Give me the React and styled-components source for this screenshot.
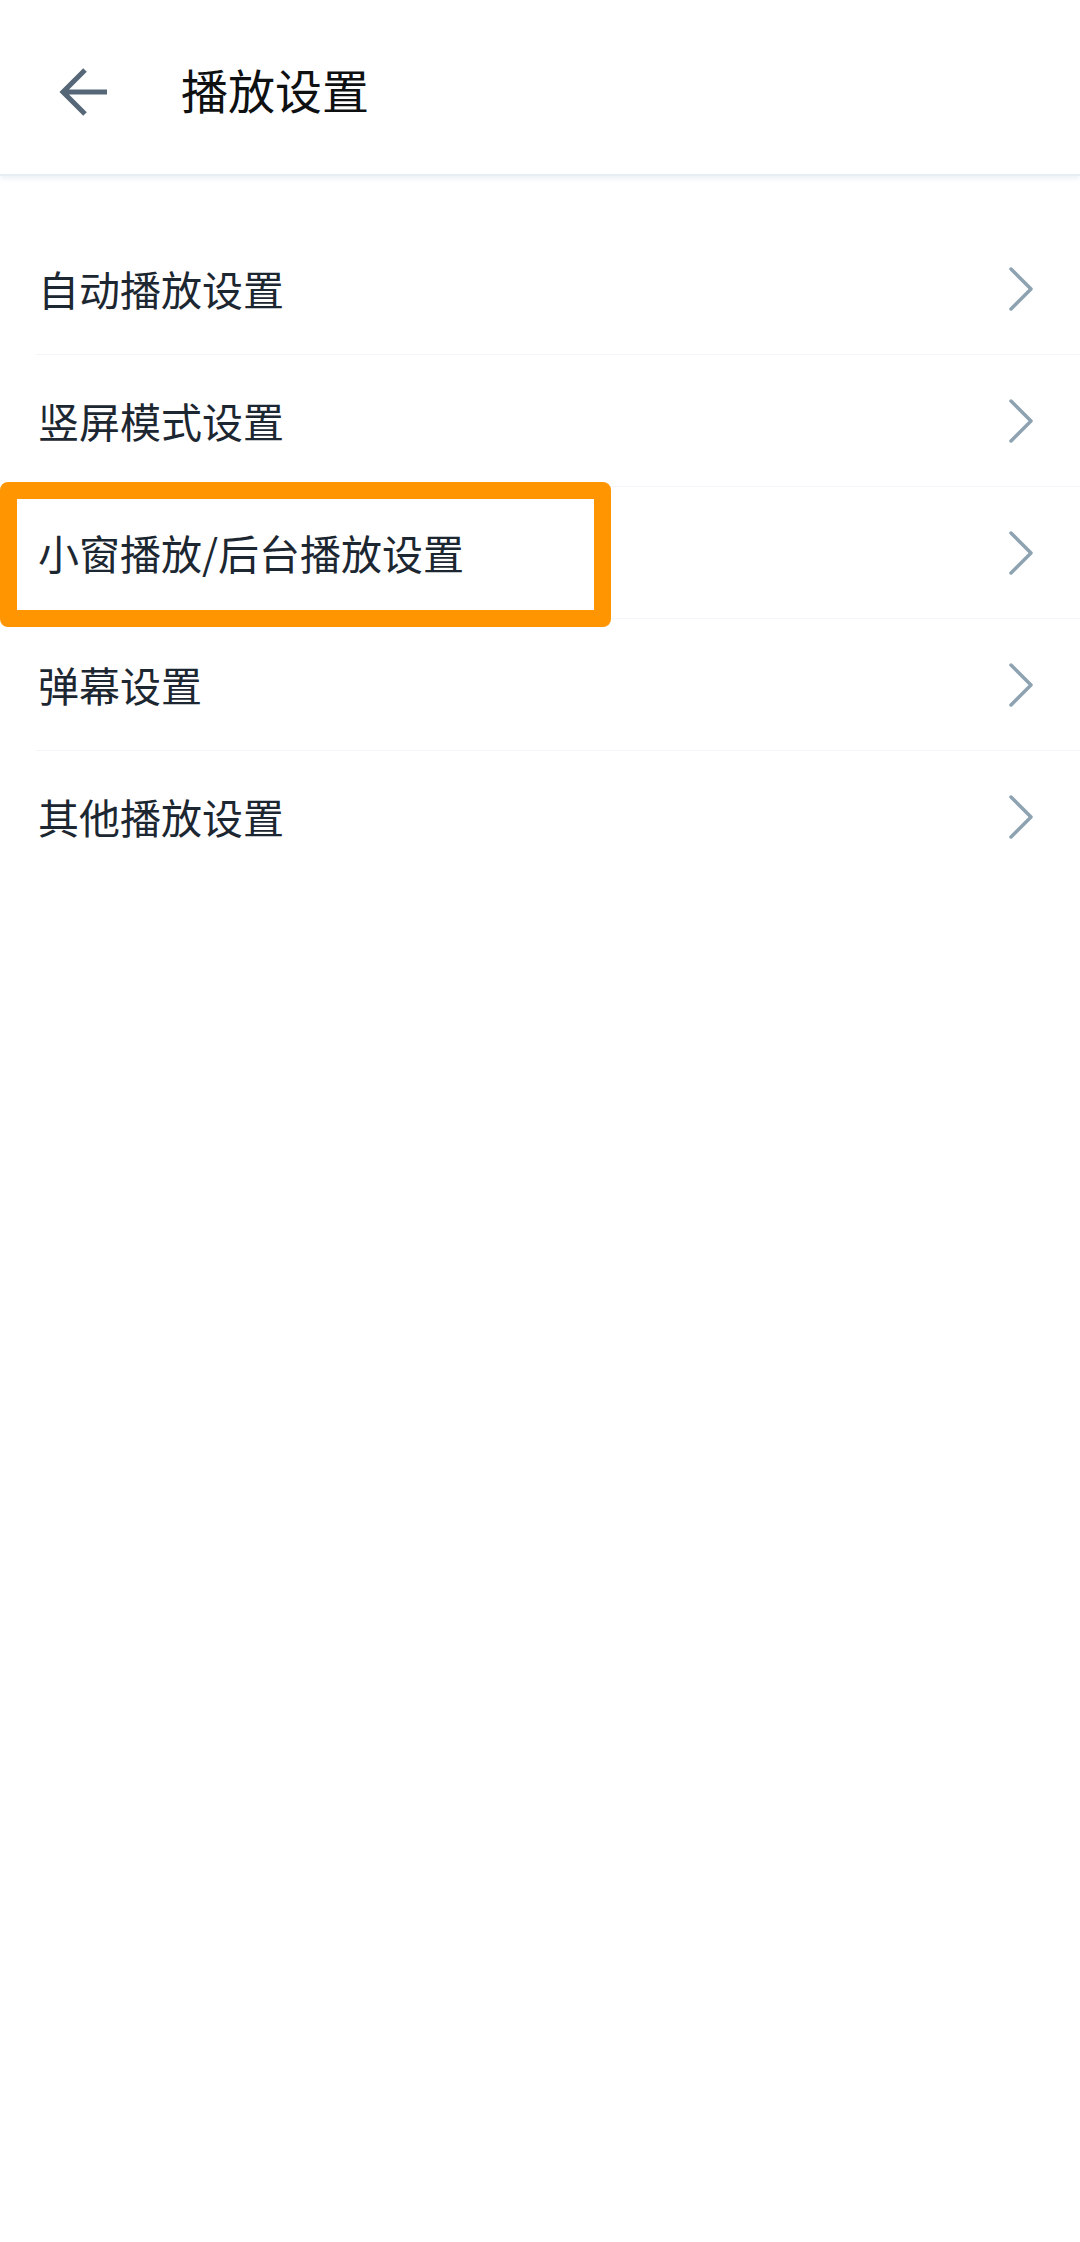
import React from 'react';
import styled, { createGlobalStyle } from 'styled-components';

const GlobalStyle = createGlobalStyle`
  html, body {
    margin: 0;
    padding: 0;
    background: #ffffff;
  }
  body {
    font-family: "Noto Sans CJK SC", "Noto Sans", sans-serif;
    -webkit-font-smoothing: antialiased;
  }
  #root {
    min-height: 2242px;
  }
`;

const items = [
    '自动播放设置',
    '竖屏模式设置',
    '小窗播放/后台播放设置',
    '弹幕设置',
    '其他播放设置',
];

// the one row the guide is pointing at
const HIGHLIGHT = 2;

export default function App() {
    return (
        <Page>
            <GlobalStyle />
            <Header>
                <BackButton aria-label="back">
                    <svg width="50" height="50" viewBox="0 0 50 50" fill="none">
                        <path
                            d="M48 25H4M26 3L4 25L26 47"
                            stroke="#566877"
                            strokeWidth="5"
                            strokeLinejoin="miter"
                        />
                    </svg>
                </BackButton>
                <Title>播放设置</Title>
            </Header>
            <List>
                {items.map((label, i) => (
                    <Row key={label}>
                        <Label>{label}</Label>
                        <Chevron width="26" height="46" viewBox="0 0 26 46" fill="none">
                            <path
                                d="M3 3L23 23L3 43"
                                stroke="#8ea3b1"
                                strokeWidth="3.5"
                                strokeLinecap="round"
                                strokeLinejoin="round"
                            />
                        </Chevron>
                        {i === HIGHLIGHT && <Highlight />}
                    </Row>
                ))}
            </List>
        </Page>
    );
}

const Page = styled.div`
  width: 1080px;
  min-height: 2242px;
  background: #ffffff;
`;

const Header = styled.header`
  height: 174px;
  display: flex;
  align-items: center;
  padding-left: 59px;
  gap: 72px;
  border-bottom: 2px solid #e7eef3;
  box-shadow: 0 3px 5px rgba(214, 226, 236, 0.45);
`;

const BackButton = styled.button`
  border: none;
  background: none;
  padding: 0;
  display: flex;
  margin-top: 9px;
`;

const Title = styled.h1`
  margin: 0;
  font-size: 47px;
  font-weight: 400;
  color: #0e1012;
  line-height: 1;
  margin-top: 3px;
`;

const List = styled.ul`
  list-style: none;
  margin: 0;
  padding: 47px 0 0;
`;

const Row = styled.li`
  position: relative;
  display: flex;
  align-items: center;
  justify-content: space-between;
  height: 131px;
  margin-left: 36px;
  padding: 0 46px 0 2px;
  border-bottom: 1px solid #f3f6f8;
  &:last-child {
    border-bottom: none;
  }
`;

const Label = styled.span`
  font-size: 41px;
  color: #1c2731;
  line-height: 1;
`;

const Chevron = styled.svg`
  flex: none;
`;

const Highlight = styled.div`
  position: absolute;
  top: -5px;
  bottom: -9px;
  left: -36px;
  width: 611px;
  box-sizing: border-box;
  border: 17px solid #ff9500;
  border-radius: 8px;
  pointer-events: none;
`;
